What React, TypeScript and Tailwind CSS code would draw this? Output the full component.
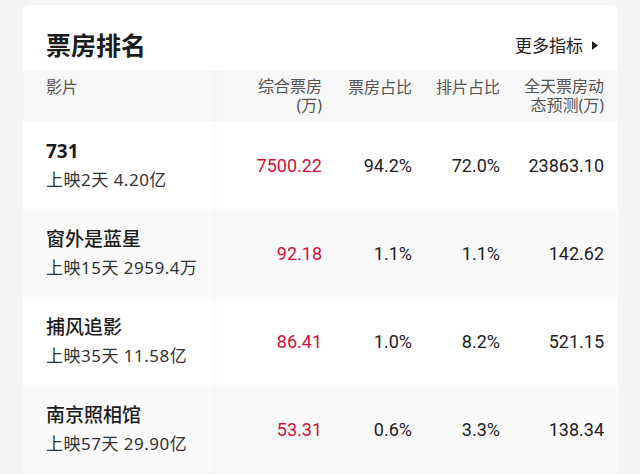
import React from 'react';

const rows = [
  { name: '731', sub: '上映2天 4.20亿', box: '7500.22', share: '94.2%', seat: '72.0%', forecast: '23863.10', bold: true },
  { name: '窗外是蓝星', sub: '上映15天 2959.4万', box: '92.18', share: '1.1%', seat: '1.1%', forecast: '142.62' },
  { name: '捕风追影', sub: '上映35天 11.58亿', box: '86.41', share: '1.0%', seat: '8.2%', forecast: '521.15' },
  { name: '南京照相馆', sub: '上映57天 29.90亿', box: '53.31', share: '0.6%', seat: '3.3%', forecast: '138.34' },
];

const cjk = "font-['Noto_Sans','Noto_Sans_CJK_SC',sans-serif]";
const num = "font-['Roboto','Noto_Sans_CJK_SC',sans-serif]";

const App = () => {
  return (
    <div className={`w-[640px] h-[474px] overflow-hidden bg-[#f4f4f4] px-[23px] pt-[5px] ${cjk}`}>
      <div className="w-[595px] bg-white rounded-t-md">
        {/* title */}
        <div className="h-[65px] flex items-center justify-between pl-[23px] pr-[20px]">
          <h2 className="text-[25px] font-bold text-[#1c1c1c] pt-[15px] leading-none">票房排名</h2>
          <div className="flex items-center gap-[9px] pt-[16px] text-[17px] text-[#222]">
            更多指标
            <svg width="6" height="9" viewBox="0 0 6 9">
              <path d="M0 0 L6 4.5 L0 9 Z" fill="#222" />
            </svg>
          </div>
        </div>

        {/* header */}
        <div className="grid grid-cols-[190px_123px_90px_88px_104px] h-[51px] bg-[#f7f7f7] text-[16px] leading-[19px] text-[#555]">
          <div className="pl-[23px] pt-[8px]">影片</div>
          <div className="pr-[14px] pt-[7px] text-right shadow-[inset_6px_0_6px_-6px_rgba(0,0,0,0.06)]">
            <div>综合票房</div>
            <div>(万)</div>
          </div>
          <div className="pr-[14px] pt-[8px] text-right">票房占比</div>
          <div className="pr-[14px] pt-[8px] text-right">排片占比</div>
          <div className="pr-[14px] pt-[7px] text-right">
            <div>全天票房动</div>
            <div>态预测(万)</div>
          </div>
        </div>

        {/* rows */}
        {rows.map((r, i) => (
          <div
            key={i}
            className={`grid grid-cols-[190px_123px_90px_88px_104px] h-[88px] items-center ${
              i % 2 ? 'bg-[#fafafa]' : 'bg-white'
            }`}
          >
            <div className="pl-[23px] flex flex-col justify-center h-full">
              <div
                className={`text-[19px] leading-[26px] text-[#1c1c1c] ${
                  r.bold ? 'font-bold' : 'font-medium'
                }`}
              >
                {r.name}
              </div>
              <div className="text-[17px] leading-[24px] tracking-[0.5px] text-[#333] mt-[4px]">{r.sub}</div>
            </div>
            <div
              className={`h-full flex items-center justify-end pr-[14px] text-[18px] text-[#d0103a] ${num} shadow-[inset_6px_0_6px_-6px_rgba(0,0,0,0.06)]`}
            >
              {r.box}
            </div>
            <div className={`pr-[14px] text-right text-[18px] text-[#222] ${num}`}>{r.share}</div>
            <div className={`pr-[14px] text-right text-[18px] text-[#222] ${num}`}>{r.seat}</div>
            <div className={`pr-[14px] text-right text-[18px] text-[#222] ${num}`}>{r.forecast}</div>
          </div>
        ))}
      </div>
    </div>
  );
};

export default App;
